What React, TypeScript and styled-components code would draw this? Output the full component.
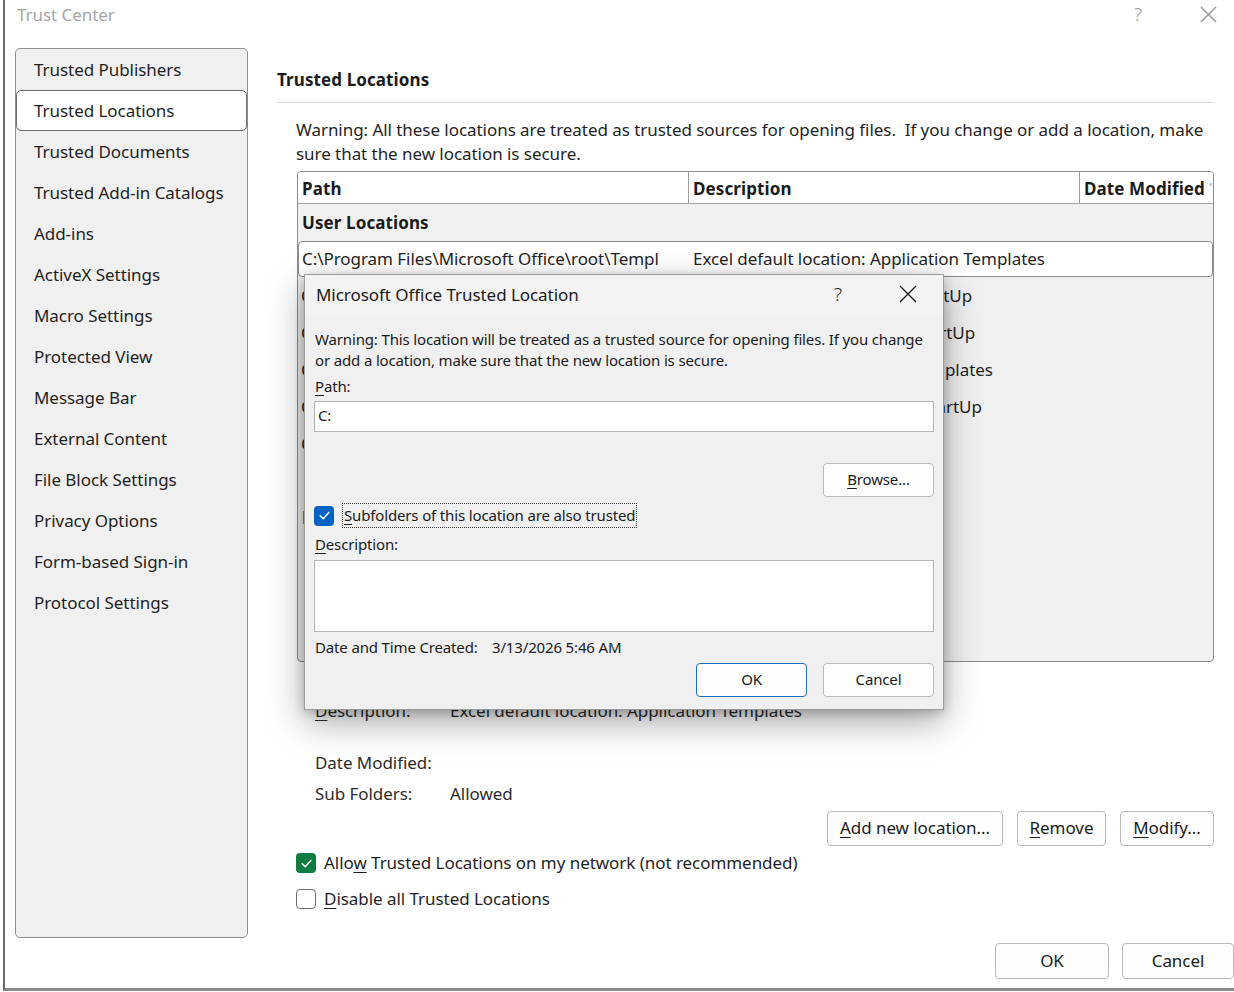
import React from "react";
import styled, { createGlobalStyle } from "styled-components";

const GlobalStyle = createGlobalStyle`
  html, body { margin: 0; padding: 0; background: #fff; }
  body {
    font-family: "Noto Sans", "Segoe UI", sans-serif;
    color: #1b1b1b;
    -webkit-font-smoothing: antialiased;
  }
  * { box-sizing: border-box; }
`;

const Window = styled.div`
  position: relative;
  width: 1234px;
  height: 992px;
  overflow: hidden;
  background: #fff;
`;

const Frame = styled.div`
  margin-left: 3px;
  height: 991px;
  border-left: 2px solid #6a6a6a;
  border-bottom: 3px solid #8a8a8a;
  display: flex;
  flex-direction: column;
`;

const TitleBar = styled.div`
  height: 30px;
  flex: none;
  display: flex;
  align-items: center;
  padding-left: 12px;
  padding-bottom: 2px;
`;

const WindowTitle = styled.div`
  flex: 1;
  font-size: 17px;
  letter-spacing: -0.05px;
  color: #a6a6a6;
`;

const TitleControls = styled.div<{ $padRight: number }>`
  display: flex;
  align-items: center;
  gap: 24px;
  padding-right: ${(p) => p.$padRight}px;
`;

const TitleButton = styled.div<{ $muted?: boolean }>`
  width: 46px;
  display: flex;
  justify-content: center;
  align-items: center;
  font-size: 19px;
  font-weight: 300;
  color: ${(p) => (p.$muted ? "#9a9a9a" : "#1b1b1b")};
`;

const Body = styled.div`
  flex: none;
  height: 908px;
  display: flex;
  gap: 29px;
  padding: 18px 0 0 10px;
`;

const Sidebar = styled.nav`
  width: 233px;
  height: 890px;
  flex: none;
  background: #f0f0f0;
  border: 1px solid #8f8f8f;
  border-radius: 5px;
  display: flex;
  flex-direction: column;
`;

const NavItem = styled.div<{ $active?: boolean }>`
  height: 41px;
  display: flex;
  align-items: center;
  padding-left: 17px;
  font-size: 17px;
  letter-spacing: -0.05px;
  color: #1f1f1f;
  border-radius: 5px;
  background: ${(p) => (p.$active ? "#fff" : "transparent")};
  border: 1px solid ${(p) => (p.$active ? "#6e6e6e" : "transparent")};
`;

const Main = styled.main`
  width: 937px;
  flex: none;
  padding-top: 20px;
  display: flex;
  flex-direction: column;
`;

const SectionTitle = styled.h2`
  margin: 0;
  font-size: 17px;
  line-height: 24px;
  font-weight: 700;
  letter-spacing: 0.1px;
  color: #1b1b1b;
`;

const Divider = styled.div`
  margin-top: 10px;
  height: 1px;
  background: #d9d9d9;
`;

const Warning = styled.p`
  margin: 15px 0 0 19px;
  font-size: 17px;
  line-height: 24px;
  letter-spacing: -0.05px;
  color: #1f1f1f;
  white-space: nowrap;
`;

const Table = styled.div`
  margin: 5px 0 0 20px;
  height: 491px;
  border: 1px solid #8c8c8c;
  border-radius: 4px;
  background: #f0f0f0;
  overflow: hidden;
`;

const HeaderRow = styled.div`
  display: grid;
  grid-template-columns: 391px 391px 1fr;
  height: 32px;
  background: #fff;
  border-bottom: 1px solid #a6a6a6;
`;

const HeaderCell = styled.div<{ $last?: boolean }>`
  display: flex;
  align-items: center;
  padding-left: 4px;
  padding-top: 1px;
  font-size: 17px;
  font-weight: 700;
  letter-spacing: 0.1px;
  white-space: nowrap;
  overflow: hidden;
  border-right: ${(p) => (p.$last ? "none" : "1px solid #a0a0a0")};
`;

const SortGlyph = styled.span`
  margin-left: 4px;
  font-size: 12px;
  font-weight: 400;
  color: #555;
`;

const GroupHeader = styled.div<{ $spaced?: boolean }>`
  height: 37px;
  display: flex;
  align-items: center;
  padding-left: 4px;
  margin-top: ${(p) => (p.$spaced ? "37px" : "0")};
  font-size: 17px;
  font-weight: 700;
  letter-spacing: 0.1px;
`;

const LocationRow = styled.div<{ $selected?: boolean }>`
  display: grid;
  grid-template-columns: ${(p) => (p.$selected ? "390px 391px 1fr" : "391px 391px 1fr")};
  align-items: center;
  height: ${(p) => (p.$selected ? "36px" : "37px")};
  padding-bottom: 1px;
  background: ${(p) => (p.$selected ? "#fff" : "transparent")};
  border: ${(p) => (p.$selected ? "1px solid #8c8c8c" : "none")};
  border-radius: 4px;
  font-size: 17px;
  letter-spacing: -0.05px;
  color: #1f1f1f;
`;

const Cell = styled.div`
  padding-left: 3px;
  white-space: nowrap;
  overflow: hidden;
`;

const DescCell = styled.div`
  padding-left: 4px;
  white-space: nowrap;
`;

const DetailsGrid = styled.div`
  margin: 6px 0 0 38px;
  display: grid;
  grid-template-columns: 135px 1fr;
  row-gap: 7px;
  font-size: 17px;
  line-height: 24px;
  letter-spacing: -0.05px;
  color: #2b2b2b;
`;

const DetailLabel = styled.div<{ $extra?: boolean }>`
  margin-bottom: ${(p) => (p.$extra ? "21px" : "0")};
`;

const ButtonRow = styled.div`
  margin-top: 5px;
  display: flex;
  justify-content: flex-end;
  gap: 14px;
`;

const PushButton = styled.button<{ $w: number; $h?: number; $size?: number; $default?: boolean }>`
  width: ${(p) => p.$w}px;
  height: ${(p) => p.$h ?? 35}px;
  padding: 0 0 2px 0;
  background: #fdfdfd;
  border: 1px solid ${(p) => (p.$default ? "#1a6fc4" : "#b9b9b9")};
  border-radius: 4px;
  font-family: inherit;
  font-size: ${(p) => p.$size ?? 17}px;
  letter-spacing: ${(p) => (p.$size && p.$size < 16 ? "-0.15px" : "-0.05px")};
  color: #1b1b1b;
  display: flex;
  align-items: center;
  justify-content: center;
`;

const Mnemonic = styled.span`
  text-decoration: underline;
  text-decoration-thickness: 1px;
  text-underline-offset: 3px;
`;

const OptionRow = styled.label<{ $gap: number }>`
  margin: ${(p) => p.$gap}px 0 0 19px;
  height: 24px;
  display: flex;
  align-items: center;
  gap: 8px;
  font-size: 17px;
  letter-spacing: -0.05px;
  color: #1f1f1f;
`;

const OptionText = styled.span`
  padding-bottom: 2px;
`;

const CheckBox = styled.span<{ $on?: boolean; $accent?: string }>`
  width: 20px;
  height: 20px;
  flex: none;
  border-radius: 4px;
  display: inline-flex;
  align-items: center;
  justify-content: center;
  background: ${(p) => (p.$on ? p.$accent : "#fff")};
  border: ${(p) => (p.$on ? "none" : "1.5px solid #6f6f6f")};
`;

const Footer = styled.div`
  flex: none;
  padding-top: 5px;
  display: flex;
  justify-content: flex-end;
  gap: 13px;
`;

/* ---------- Dialog ---------- */

const Dialog = styled.div`
  position: absolute;
  left: 304px;
  top: 274px;
  width: 640px;
  height: 436px;
  background: #f0f0f0;
  border: 1px solid #9b9b9b;
  box-shadow: 0 12px 34px rgba(0, 0, 0, 0.34), 0 3px 10px rgba(0, 0, 0, 0.2);
  display: flex;
  flex-direction: column;
`;

const DialogTitleBar = styled.div`
  height: 41px;
  flex: none;
  display: flex;
  align-items: center;
  padding-left: 11px;
  padding-bottom: 3px;
  background: #f3f3f3;
`;

const DialogTitle = styled.div`
  flex: 1;
  font-size: 17px;
  letter-spacing: -0.05px;
  color: #1b1b1b;
`;

const DialogBody = styled.div`
  padding: 13px 9px 0 9px;
  display: flex;
  flex-direction: column;
  font-size: 15px;
  letter-spacing: -0.15px;
  color: #1b1b1b;
`;

const DialogText = styled.div<{ $top?: number }>`
  margin-top: ${(p) => p.$top ?? 0}px;
  padding-left: 1px;
  line-height: 21px;
  white-space: nowrap;
`;

const TextField = styled.div<{ $h: number; $top: number }>`
  margin-top: ${(p) => p.$top}px;
  height: ${(p) => p.$h}px;
  background: #fff;
  border: 1px solid #b3b3b3;
  padding: 3px 3px;
  line-height: 21px;
`;

const RightAligned = styled.div<{ $top: number }>`
  margin-top: ${(p) => p.$top}px;
  display: flex;
  justify-content: flex-end;
  gap: 16px;
`;

const CheckLine = styled.div`
  margin-top: 6px;
  height: 25px;
  display: flex;
  align-items: center;
  gap: 8px;
`;

const FocusLabel = styled.span`
  border: 1px dotted #333;
  padding: 0 1px;
  line-height: 23px;
`;

const DateLine = styled.div`
  margin-top: 5px;
  padding-left: 1px;
  line-height: 21px;
  display: flex;
`;

const DateLabel = styled.span`
  width: 177px;
`;

/* ---------- Icons ---------- */

const CloseIcon = ({ color, size }: { color: string; size: number }) => (
  <svg width={size} height={size} viewBox="0 0 18 18" fill="none">
    <path d="M1 1 L17 17 M17 1 L1 17" stroke={color} strokeWidth="1.3" />
  </svg>
);

const Check = () => (
  <svg width="13" height="13" viewBox="0 0 13 13" fill="none">
    <path d="M2.2 6.8 L5.2 9.7 L10.9 3.4" stroke="#fff" strokeWidth="1.5" strokeLinecap="round" strokeLinejoin="round" />
  </svg>
);

const navItems = [
  "Trusted Publishers",
  "Trusted Locations",
  "Trusted Documents",
  "Trusted Add-in Catalogs",
  "Add-ins",
  "ActiveX Settings",
  "Macro Settings",
  "Protected View",
  "Message Bar",
  "External Content",
  "File Block Settings",
  "Privacy Options",
  "Form-based Sign-in",
  "Protocol Settings",
];

const otherRows = [
  { path: "C:\\Users\\user\\AppData\\Roaming\\Microsoft\\Excel\\XLSTART\\", desc: "Excel default location: User StartUp" },
  { path: "C:\\Program Files\\Microsoft Office\\root\\Office16\\XLSTART\\", desc: "Excel default location: Excel StartUp" },
  { path: "C:\\Users\\user\\AppData\\Roaming\\Microsoft\\Templates\\", desc: "Excel default location: User Templates" },
  { path: "C:\\Program Files\\Microsoft Office\\root\\Office16\\STARTUP\\", desc: "Excel default location: Office StartUp" },
  { path: "C:\\Program Files\\Microsoft Office\\root\\Office16\\Library\\", desc: "Excel default location: Add-ins" },
];

export default function App() {
  return (
    <>
      <GlobalStyle />
      <Window>
        <Frame>
          <TitleBar>
            <WindowTitle>Trust Center</WindowTitle>
            <TitleControls $padRight={3}>
              <TitleButton $muted>?</TitleButton>
              <TitleButton $muted>
                <CloseIcon color="#8f8f8f" size={17} />
              </TitleButton>
            </TitleControls>
          </TitleBar>

          <Body>
            <Sidebar>
              {navItems.map((item) => (
                <NavItem key={item} $active={item === "Trusted Locations"}>
                  {item}
                </NavItem>
              ))}
            </Sidebar>

            <Main>
              <SectionTitle>Trusted Locations</SectionTitle>
              <Divider />
              <Warning>
                Warning: All these locations are treated as trusted sources for opening files.&nbsp; If you change or add a location, make
                <br />
                sure that the new location is secure.
              </Warning>

              <Table>
                <HeaderRow>
                  <HeaderCell>Path</HeaderCell>
                  <HeaderCell>Description</HeaderCell>
                  <HeaderCell $last>
                    Date Modified<SortGlyph>˅</SortGlyph>
                  </HeaderCell>
                </HeaderRow>
                <GroupHeader>User Locations</GroupHeader>
                <LocationRow $selected>
                  <Cell>C:\Program Files\Microsoft Office\root\Templ</Cell>
                  <DescCell>Excel default location: Application Templates</DescCell>
                  <Cell />
                </LocationRow>
                {otherRows.map((r) => (
                  <LocationRow key={r.desc}>
                    <Cell>{r.path}</Cell>
                    <DescCell>{r.desc}</DescCell>
                    <Cell />
                  </LocationRow>
                ))}
                <GroupHeader $spaced>Policy Locations</GroupHeader>
              </Table>

              <DetailsGrid>
                <DetailLabel>Path:</DetailLabel>
                <div>C:\Program Files\Microsoft Office\root\Templates\</div>
                <DetailLabel $extra>
                  <Mnemonic>D</Mnemonic>escription:
                </DetailLabel>
                <div>Excel default location: Application Templates</div>
                <DetailLabel>Date Modified:</DetailLabel>
                <div />
                <DetailLabel>Sub Folders:</DetailLabel>
                <div>Allowed</div>
              </DetailsGrid>

              <ButtonRow>
                <PushButton $w={176}>
                  <span>
                    <Mnemonic>A</Mnemonic>dd new location...
                  </span>
                </PushButton>
                <PushButton $w={89}>
                  <span>
                    <Mnemonic>R</Mnemonic>emove
                  </span>
                </PushButton>
                <PushButton $w={94}>
                  <span>
                    <Mnemonic>M</Mnemonic>odify...
                  </span>
                </PushButton>
              </ButtonRow>

              <OptionRow $gap={5}>
                <CheckBox $on $accent="#117c41">
                  <Check />
                </CheckBox>
                <OptionText>
                  Allo<Mnemonic>w</Mnemonic> Trusted Locations on my network (not recommended)
                </OptionText>
              </OptionRow>
              <OptionRow $gap={12}>
                <CheckBox />
                <OptionText>
                  <Mnemonic>D</Mnemonic>isable all Trusted Locations
                </OptionText>
              </OptionRow>
            </Main>
          </Body>

          <Footer>
            <PushButton $w={114} $h={36}>OK</PushButton>
            <PushButton $w={112} $h={36}>Cancel</PushButton>
          </Footer>
        </Frame>

        <Dialog>
          <DialogTitleBar>
            <DialogTitle>Microsoft Office Trusted Location</DialogTitle>
            <TitleControls $padRight={12}>
              <TitleButton>?</TitleButton>
              <TitleButton>
                <CloseIcon color="#1b1b1b" size={18} />
              </TitleButton>
            </TitleControls>
          </DialogTitleBar>
          <DialogBody>
            <DialogText>
              Warning: This location will be treated as a trusted source for opening files. If you change
              <br />
              or add a location, make sure that the new location is secure.
            </DialogText>
            <DialogText $top={5}>
              <Mnemonic>P</Mnemonic>ath:
            </DialogText>
            <TextField $h={31} $top={4}>C:</TextField>
            <RightAligned $top={31}>
              <PushButton $w={111} $h={34} $size={15}>
                <span>
                  <Mnemonic>B</Mnemonic>rowse...
                </span>
              </PushButton>
            </RightAligned>
            <CheckLine>
              <CheckBox $on $accent="#0063c4">
                <Check />
              </CheckBox>
              <FocusLabel>
                <Mnemonic>S</Mnemonic>ubfolders of this location are also trusted
              </FocusLabel>
            </CheckLine>
            <DialogText $top={6}>
              <Mnemonic>D</Mnemonic>escription:
            </DialogText>
            <TextField $h={72} $top={5} />
            <DateLine>
              <DateLabel>Date and Time Created:</DateLabel>
              <span>3/13/2026 5:46 AM</span>
            </DateLine>
            <RightAligned $top={5}>
              <PushButton $w={111} $h={34} $size={15} $default>
                OK
              </PushButton>
              <PushButton $w={111} $h={34} $size={15}>
                Cancel
              </PushButton>
            </RightAligned>
          </DialogBody>
        </Dialog>
      </Window>
    </>
  );
}
